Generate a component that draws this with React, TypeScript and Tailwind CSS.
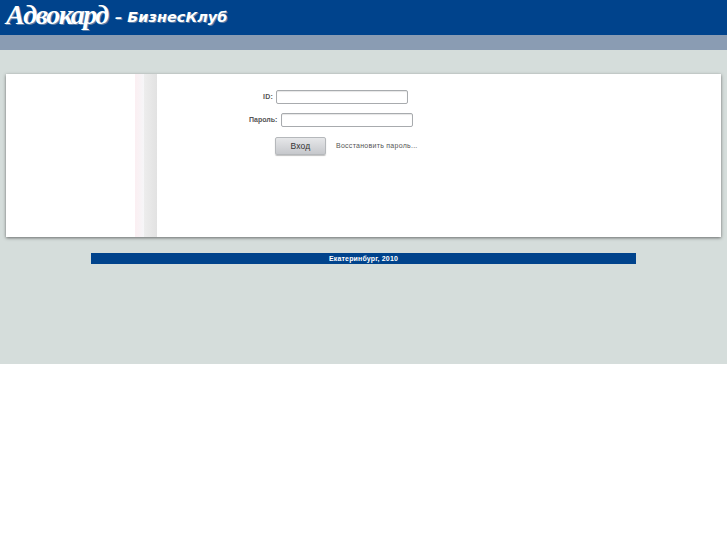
export default function App() {
  return (
    <div className="min-h-[545px] bg-white font-['Liberation_Sans',sans-serif]">
      {/* Header */}
      <div className="flex h-[35px] items-center bg-[#00438c] pl-[6px] text-white">
        <span className="mt-[-5px] w-[105px] font-['Liberation_Serif',serif] text-[28px] leading-[34px] font-bold tracking-[-1.5px] whitespace-nowrap italic [text-shadow:1px_1px_0_#5d7ea6]">
          Адвокард
        </span>
        <span className="mt-[-2px] ml-[4px] font-['DejaVu_Sans',sans-serif] text-[14.5px] leading-[20px] font-bold whitespace-nowrap italic [text-shadow:1px_1px_0_#5d7ea6]">
          – БизнесКлуб
        </span>
      </div>
      <div className="h-[15px] bg-[#8a9cb3]" />

      {/* Main */}
      <div className="h-[314px] bg-[#d5dddb] pt-[24px]">
        <div className="mx-[6px] flex h-[163px] bg-white shadow-[0_1px_3px_0_rgba(70,70,70,0.75)]">
          <div className="w-[129px]" />
          <div className="flex w-[22px]">
            <div className="w-[9px] bg-gradient-to-r from-[#fbeff2] to-[#f6f6f8]" />
            <div className="w-[13px] bg-gradient-to-r from-[#ededed] to-[#e2e2e2]" />
          </div>

          <div className="flex-1 pt-[16px] text-[7px] text-[#555]">
            <div className="ml-[106px] flex h-[14px] items-center">
              <label className="w-[9px] font-bold tracking-[0.2px] whitespace-nowrap">ID:</label>
              <input className="ml-[4px] h-[14px] w-[132px] rounded-[2px] border border-[#a8abae] bg-white shadow-[inset_0_1px_1px_rgba(0,0,0,0.1)]" />
            </div>
            <div className="mt-[9px] ml-[92px] flex h-[14px] items-center">
              <label className="w-[28px] font-bold whitespace-nowrap">Пароль:</label>
              <input className="ml-[4px] h-[14px] w-[132px] rounded-[2px] border border-[#a8abae] bg-white shadow-[inset_0_1px_1px_rgba(0,0,0,0.1)]" />
            </div>
            <div className="mt-[10px] ml-[118px] flex items-center">
              <button className="h-[18px] w-[51px] rounded-[2px] border border-[#b5b8bb] bg-gradient-to-b from-[#e6e7e9] to-[#c6c8cc] text-[8.5px] tracking-[0.2px] text-[#333] shadow-[0_1px_1px_rgba(0,0,0,0.25)]">
                Вход
              </button>
              <a className="mt-[1px] ml-[10px] tracking-[0.27px] whitespace-nowrap text-[#555]">Восстановить пароль...</a>
            </div>
          </div>
        </div>

        <div className="mx-[91px] mt-[16px] flex h-[11px] items-center justify-center bg-[#00438c] pt-[1px] text-[7px] font-bold tracking-[0.15px] text-white">
          Екатеринбург, 2010
        </div>
      </div>
    </div>
  );
}
